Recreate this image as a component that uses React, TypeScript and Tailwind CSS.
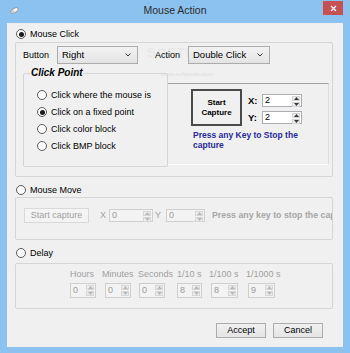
import React from "react";

function Radio({ checked, label, disabled }: { checked?: boolean; label: string; disabled?: boolean }) {
  return (
    <div className="flex items-center h-[12px]">
      <span className="w-[10px] h-[10px] rounded-full border border-[#5c5c5c] bg-[#fbfbfb] flex items-center justify-center shrink-0">
        {checked && <span className="w-[5px] h-[5px] rounded-full bg-[#1c1c1c]" />}
      </span>
      <span className={"ml-[4px] text-[9px] leading-none " + (disabled ? "text-[#a0a0a0]" : "text-black")}>{label}</span>
    </div>
  );
}

function Arrows({ disabled }: { disabled?: boolean }) {
  const c = disabled ? "#b8b8b8" : "#3a3a3a";
  return (
    <div className="flex flex-col w-[8px] h-full py-[1px] mr-[1px] gap-[1px] shrink-0">
      <div className="flex-1 bg-[#ececec] border border-[#d6d6d6] flex items-center justify-center">
        <svg width="5" height="3" viewBox="0 0 5 3"><path d="M0 3 L2.5 0 L5 3 Z" fill={c} /></svg>
      </div>
      <div className="flex-1 bg-[#ececec] border border-[#d6d6d6] flex items-center justify-center">
        <svg width="5" height="3" viewBox="0 0 5 3"><path d="M0 0 L2.5 3 L5 0 Z" fill={c} /></svg>
      </div>
    </div>
  );
}

function Spin({ value, w, h, disabled }: { value: string; w: string; h: string; disabled?: boolean }) {
  return (
    <div
      className={
        "flex items-stretch border shrink-0 " +
        w +
        " " +
        h +
        (disabled ? " border-[#cfcfcf] bg-[#f3f3f3]" : " border-[#abadb3] bg-white")
      }
    >
      <span className={"flex-1 flex items-center pl-[2px] text-[9px] leading-none " + (disabled ? "text-[#9a9a9a]" : "text-black")}>
        {value}
      </span>
      <Arrows disabled={disabled} />
    </div>
  );
}

function Select({ value, w }: { value: string; w: string }) {
  return (
    <div className={"h-[18px] flex items-center shrink-0 border border-[#acacac] bg-gradient-to-b from-[#f2f2f2] to-[#e4e4e4] " + w}>
      <span className="flex-1 pl-[4px] text-[9.5px] leading-none text-black">{value}</span>
      <svg width="6" height="4" viewBox="0 0 6 4" className="mr-[6px]">
        <path d="M0.5 0.5 L3 3 L5.5 0.5" stroke="#333" strokeWidth="1" fill="none" />
      </svg>
    </div>
  );
}

export default function App() {
  return (
    <div className="w-[350px] h-[353px] bg-[#8bc2ef] flex flex-col font-['Liberation_Sans',Arial,sans-serif] overflow-hidden">
      {/* Title bar */}
      <div className="relative h-[23px] shrink-0 flex items-center justify-center">
        <svg className="absolute left-[10px] top-[7px]" width="9" height="7" viewBox="0 0 9 7">
          <g transform="rotate(-30 4.5 3.5)">
            <rect x="0.5" y="1.5" width="8" height="4" rx="2" fill="#f4f4f4" stroke="#8c8c8c" strokeWidth="0.8" />
            <rect x="0.8" y="1.8" width="3" height="3.4" rx="1.5" fill="#c8c8c8" />
          </g>
        </svg>
        <span className="text-[10.5px] text-[#2b2b2b] mt-[-1px]">Mouse Action</span>
        <div className="absolute right-[7px] top-[1px] w-[20px] h-[14px] bg-[#c75050] flex items-center justify-center">
          <svg width="7" height="7" viewBox="0 0 7 7">
            <path d="M1 1 L6 6 M6 1 L1 6" stroke="#fff" strokeWidth="1.3" />
          </svg>
        </div>
      </div>

      {/* Client */}
      <div className="mx-[7px] h-[324px] bg-[#f0f0f0] flex flex-col">
        <div className="mt-[5px] pl-[9px]">
          <Radio checked label="Mouse Click" />
        </div>

        {/* Group 1 */}
        <div className="relative mt-[2px] ml-[8px] w-[318px] h-[135px] border border-[#d5d5d5] rounded-[2px] flex flex-col">
          <div className="absolute left-[131px] top-[3px] text-[13px] font-bold tracking-[1px] text-[#e8e8e8] leading-none">SOFTPEDIA</div>
          <div className="absolute left-[145px] top-[28px] text-[6px] text-[#dedede] leading-none">www.softpedia.com</div>
          <div className="relative mt-[3px] h-[18px] pl-[7px] flex items-center">
            <span className="w-[34px] shrink-0 text-[9px] leading-none text-black">Button</span>
            <Select value="Right" w="w-[81px]" />
            <span className="ml-[17px] w-[33px] shrink-0 text-[9px] leading-none text-black">Action</span>
            <Select value="Double Click" w="w-[82px]" />
          </div>
          <div className="mt-[9px] pl-[7px] flex items-start">
            <div className="relative shrink-0 w-[145px] h-[94px] border border-[#d5d5d5] rounded-[2px] flex flex-col pt-[15px] pl-[13px] gap-[5px]">
              <span className="absolute left-[6px] top-[-6px] px-[1px] bg-[#f0f0f0] text-[10px] font-bold italic leading-none text-black">
                Click Point
              </span>
              <Radio label="Click where the mouse is" />
              <Radio checked label="Click on a fixed point" />
              <Radio label="Click color block" />
              <Radio label="Click BMP block" />
            </div>
            <div className="ml-[-1px] mt-[10px] shrink-0 w-[162px] h-[82px] border border-t-[#a0a0a0] border-l-[#a0a0a0] border-r-[#dcdcdc] border-b-[#ffffff] flex flex-col pt-[5px]">
              <div className="flex items-start pl-[23px]">
                <div className="w-[51px] h-[37px] shrink-0 border-2 border-[#4a4a4a] bg-[#f0f0f0] flex items-center justify-center text-center">
                  <span className="text-[8px] font-bold leading-[10px] text-black">
                    Start
                    <br />
                    Capture
                  </span>
                </div>
                <div className="ml-[6px] mt-[5px] flex flex-col gap-[4px]">
                  <div className="flex items-center">
                    <span className="w-[14px] shrink-0 text-[9.5px] font-bold leading-none text-black">X:</span>
                    <Spin value="2" w="w-[40px]" h="h-[13px]" />
                  </div>
                  <div className="flex items-center">
                    <span className="w-[14px] shrink-0 text-[9.5px] font-bold leading-none text-black">Y:</span>
                    <Spin value="2" w="w-[40px]" h="h-[13px]" />
                  </div>
                </div>
              </div>
              <div className="mt-[4px] pl-[25px] text-[8.5px] font-bold leading-[10px] text-[#28289c]">
                Press any Key to Stop the
                <br />
                capture
              </div>
            </div>
          </div>
        </div>

        <div className="mt-[7px] pl-[9px]">
          <Radio label="Mouse Move" />
        </div>

        {/* Group 2 */}
        <div className="mt-[1px] ml-[8px] w-[318px] h-[43px] border border-[#d5d5d5] rounded-[2px] overflow-hidden">
          <div className="mt-[10px] h-[15px] pl-[8px] flex items-center whitespace-nowrap">
            <div className="w-[65px] h-[15px] shrink-0 border border-[#d9d9d9] bg-[#f4f4f4] flex items-center justify-center">
              <span className="text-[9px] leading-none text-[#a0a0a0]">Start capture</span>
            </div>
            <span className="ml-[11px] w-[9px] shrink-0 text-[9px] leading-none text-[#a0a0a0]">X</span>
            <Spin value="0" w="w-[44px]" h="h-[13px]" disabled />
            <span className="ml-[2px] w-[11px] shrink-0 text-[9px] leading-none text-[#a0a0a0]">Y</span>
            <Spin value="0" w="w-[39px]" h="h-[13px]" disabled />
            <span className="ml-[7px] shrink-0 text-[8.8px] font-bold leading-none text-[#a6a6a6]">Press any key to stop the capture</span>
          </div>
        </div>

        <div className="mt-[7px] pl-[9px]">
          <Radio label="Delay" />
        </div>

        {/* Group 3 */}
        <div className="mt-[4px] ml-[8px] w-[318px] h-[46px] border border-[#d5d5d5] rounded-[2px] flex pt-[5px] pl-[54px]">
          {[
            { l: "Hours", v: "0", w: "w-[32px]", so: "ml-[0px]", sw: "w-[26px]" },
            { l: "Minutes", v: "0", w: "w-[36px]", so: "ml-[3px]", sw: "w-[26px]" },
            { l: "Seconds", v: "0", w: "w-[39px]", so: "ml-[1px]", sw: "w-[26px]" },
            { l: "1/10 s", v: "8", w: "w-[32px]", so: "ml-[0px]", sw: "w-[25px]" },
            { l: "1/100 s", v: "8", w: "w-[37px]", so: "ml-[2px]", sw: "w-[27px]" },
            { l: "1/1000 s", v: "9", w: "w-[50px]", so: "ml-[2px]", sw: "w-[27px]" },
          ].map((c) => (
            <div key={c.l} className={"flex flex-col shrink-0 " + c.w}>
              <span className="h-[10px] text-[9px] leading-[10px] text-[#a0a0a0] whitespace-nowrap">{c.l}</span>
              <div className={"mt-[4px] " + c.so}>
                <Spin value={c.v} w={c.sw} h="h-[15px]" disabled />
              </div>
            </div>
          ))}
        </div>

        {/* Buttons */}
        <div className="mt-[14px] flex justify-end pr-[20px] gap-[7px]">
          <div className="w-[50px] h-[15px] border border-[#acacac] bg-gradient-to-b from-[#f0f0f0] to-[#e5e5e5] flex items-center justify-center">
            <span className="text-[9px] leading-none text-black">Accept</span>
          </div>
          <div className="w-[50px] h-[15px] border border-[#acacac] bg-gradient-to-b from-[#f0f0f0] to-[#e5e5e5] flex items-center justify-center">
            <span className="text-[9px] leading-none text-black">Cancel</span>
          </div>
        </div>
      </div>
    </div>
  );
}
